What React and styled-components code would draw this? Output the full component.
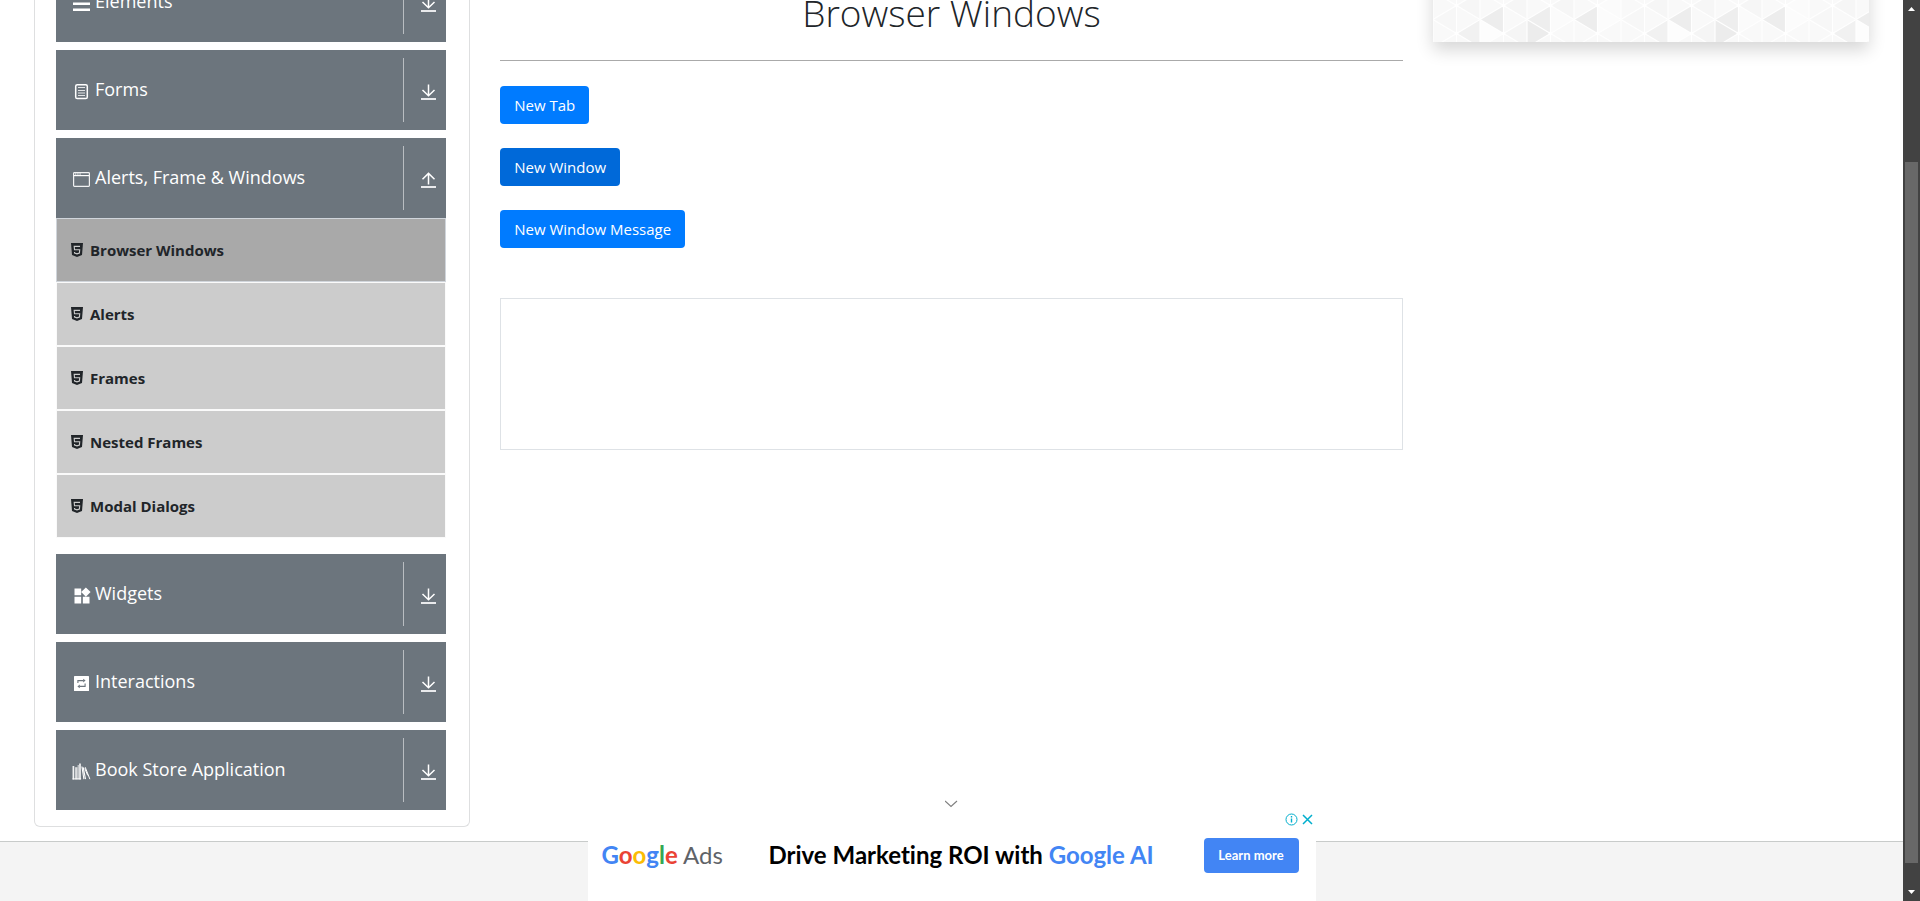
import React from 'react';
import styled, { createGlobalStyle, css } from 'styled-components';
import { MdWidgets } from 'react-icons/md';

const Global = createGlobalStyle`
  *, *::before, *::after { box-sizing: border-box; }
  body {
    margin: 0;
    background: #fff;
    color: #212529;
    font-family: "Open Sans", "Noto Sans", sans-serif;
    font-size: 15px;
    line-height: 24px;
    overflow: hidden;
  }
`;

const Shell = styled.div`
  display: flex;
  height: 100vh;
  overflow: hidden;
`;

const Page = styled.div`
  position: relative;
  flex: 1;
  display: flex;
  flex-direction: column;
  overflow: hidden;
`;

const Columns = styled.div`
  display: grid;
  grid-template-columns: 1fr 2fr 1fr;
  align-items: start;
  margin-top: -54px;
  padding: 0 19px 14px;
`;

const Column = styled.div`
  padding: 0 15px;
`;

const Panel = styled.nav`
  display: flex;
  flex-direction: column;
  gap: 8px;
  padding: 16px 23px 16px 21px;
  border: 1px solid #dedfe0;
  border-top: 0;
  border-radius: 0 0 6px 6px;
`;

const GroupHeader = styled.button`
  display: flex;
  align-items: center;
  width: 100%;
  height: 80px;
  padding: 8px 10px 8px 16px;
  border: 0;
  background: #6c757d;
  color: #fff;
  font: inherit;
  font-size: 18px;
  text-align: left;
`;

const GroupIcon = styled.span`
  display: flex;
  width: 19px;
  justify-content: center;
  padding-top: 3px;
  svg { display: block; flex: none; }
`;

const GroupLabel = styled.span`
  flex: 1;
  padding: 0 0 2px 4px;
`;

const Toggle = styled.span`
  display: flex;
  align-items: center;
  justify-content: flex-end;
  width: 33px;
  height: 64px;
  padding-top: 4px;
  border-left: 1px solid #b9bdc1;
  svg { display: block; }
`;

const Items = styled.ul`
  list-style: none;
  margin: 0 0 8px;
  padding: 0;
`;

const ItemLink = styled.a`
  display: flex;
  align-items: center;
  gap: 7px;
  height: 64px;
  padding: 0 14px;
  border: 1px solid ${p => (p.$active ? '#d0d5db' : '#fafafa')};
  background: ${p => (p.$active ? '#a9a9a9' : '#ccc')};
  color: #212529;
  font-weight: 700;
  text-decoration: none;
  svg { display: block; }
`;

const Title = styled.h1`
  margin: 0;
  padding: 43px 0 23px;
  border-bottom: 1px solid #aaa;
  font-size: 37px;
  line-height: 48px;
  font-weight: 300;
  text-align: center;
`;

const Actions = styled.div`
  display: flex;
  flex-direction: column;
  align-items: flex-start;
  gap: 24px;
  margin-top: 25px;
`;

const Action = styled.button`
  height: 38px;
  padding: 0 14px;
  border: 0;
  border-radius: 4px;
  background: ${p => (p.$pressed ? '#0069d9' : '#007bff')};
  color: #fff;
  font: inherit;
`;

const Frame = styled.div`
  height: 152px;
  margin-top: 50px;
  border: 1px solid #dee2e6;
`;

const SideBanner = styled.div`
  height: 96px;
  box-shadow: 0 8px 16px rgba(0, 0, 0, 0.16);
  svg { display: block; }
`;

const Footer = styled.footer`
  flex: 1;
  border-top: 1px solid #c8cbca;
  background: #f4f4f4;
`;

const Ad = styled.aside`
  position: absolute;
  left: 50%;
  bottom: 0;
  width: 728px;
  height: 108px;
  transform: translateX(-50%);
  display: flex;
  flex-direction: column;
  background: #fff;
`;

const Collapse = styled.button`
  display: flex;
  justify-content: center;
  align-items: center;
  height: 20px;
  padding: 2px 0 0;
  border: 0;
  background: none;
`;

const AdControls = styled.div`
  display: flex;
  justify-content: flex-end;
  gap: 4px;
  height: 14px;
  padding-right: 3px;
`;

const AdControl = styled.button`
  display: flex;
  padding: 0;
  border: 0;
  background: none;
`;

const AdBody = styled.div`
  display: flex;
  align-items: center;
  height: 40px;
  padding: 0 17px 0 14px;
  margin-top: 8px;
`;

const AdLogo = styled.span`
  width: 167px;
  font-family: Lato, sans-serif;
  font-size: 24px;
  color: #5f6368;
`;

const Tint = styled.span`
  color: ${p => p.$c};
  ${p => p.$strong && css`font-weight: 700;`}
`;

const AdText = styled.span`
  flex: 1;
  font-family: Lato, sans-serif;
  font-size: 24px;
  font-weight: 700;
  font-variant-ligatures: none;
  color: #000;
  white-space: nowrap;
`;

const AdButton = styled.a`
  display: flex;
  align-items: center;
  justify-content: center;
  width: 95px;
  height: 35px;
  border-radius: 4px;
  background: #4285f4;
  color: #fff;
  font-family: Lato, sans-serif;
  font-size: 13px;
  font-weight: 700;
  text-decoration: none;
`;

const Scrollbar = styled.div`
  display: flex;
  flex-direction: column;
  align-items: center;
  width: 17px;
  padding: 7px 0;
  background: #424242;
  svg { display: block; }
`;

const Track = styled.div`
  display: grid;
  grid-template-rows: 151fr 701fr 27fr;
  flex: 1;
  width: 13px;
`;

const Thumb = styled.div`
  grid-row: 2;
  background: #686868;
`;

const Bars = () => (
  <svg width="17" height="17" viewBox="0 0 17 17" fill="#fff">
    <path d="M0 1.5h17V4H0zM0 7.5h17V10H0zM0 13.5h17V16H0z" />
  </svg>
);

const FormIcon = () => (
  <svg width="17" height="17" viewBox="0 0 17 17" fill="none" stroke="#fff">
    <rect x="2.7" y="1.7" width="11.6" height="13.8" rx="1.6" strokeWidth="1.5" />
    <path d="M5 4.5h7M5 7.5h7M5 10h7M5 12.5h7" strokeOpacity=".8" />
  </svg>
);

const WindowIcon = () => (
  <svg width="17" height="17" viewBox="0 0 17 17" fill="none" stroke="#fff">
    <rect x=".6" y="1.6" width="15.8" height="13.8" rx=".8" strokeWidth="1.2" strokeOpacity=".9" />
    <path d="M1 4.6h15" strokeWidth="1.2" />
    <path d="M2 3h1.4M4.2 3h1.4M6.4 3h1.4" strokeWidth="1.2" />
  </svg>
);

const SwapIcon = () => (
  <svg width="17" height="17" viewBox="0 0 17 17">
    <rect x="1" y="1" width="15" height="15" rx=".6" fill="#fff" />
    <path d="M4.9 8V5.6h5.6M12.1 8.6v2.8H6.5" fill="none" stroke="#6c757d" strokeWidth="1.1" />
    <path d="M10.2 3.8l2.4 1.8-2.4 1.8zM6.8 9.6l-2.4 1.8 2.4 1.8z" fill="#6c757d" />
  </svg>
);

const BooksIcon = () => (
  <svg width="19" height="17" viewBox="0 0 19 17" fill="none" stroke="#fff">
    <path d="M1.4 3v13.4M8 .5v15.9" strokeWidth="1.7" strokeOpacity=".9" />
    <path d="M4.3 4.2v12.2" strokeWidth="2.4" strokeOpacity=".75" />
    <path d="M6.2 2v14.4" strokeWidth="1" strokeOpacity=".8" />
    <path d="M9.9 3.5l2 12.7M11.2 4.4l2.3 11.8" strokeWidth="1.1" />
    <path d="M13.2 4.2l4.7 12M12.8 5.4l2.9 7" strokeWidth="1" />
    <path d="M.5 15.9h8.6" strokeWidth="1" />
  </svg>
);

const HtmlIcon = () => (
  <svg width="12" height="14" viewBox="0 0 12 14">
    <path d="M0 0h12l-1 12-5 2-5-2z" fill="#212529" />
    <path d="M9 3.4H3.2l.3 3.3h5.2l-.3 3.3L6 10.8 3.6 10l-.1-1" fill="none" stroke="#ccc" strokeWidth="1.1" />
  </svg>
);

const Arrow = ({ up }) => (
  <svg width="15" height="17" viewBox="0 0 15 17" fill="none" stroke="#fff" strokeWidth="1.5">
    {up ? <path d="M7.5 12.6V1.4M1.5 7.2l6-5.8 6 5.8" /> : <path d="M7.5 .6v11.2M1.5 6l6 5.8 6-5.8" />}
    <path d="M0 15h15" strokeWidth="2" strokeOpacity=".85" />
  </svg>
);

const Group = ({ icon, label, open }) => (
  <GroupHeader type="button" aria-expanded={!!open}>
    <GroupIcon>{icon}</GroupIcon>
    <GroupLabel>{label}</GroupLabel>
    <Toggle><Arrow up={open} /></Toggle>
  </GroupHeader>
);

const items = ['Browser Windows', 'Alerts', 'Frames', 'Nested Frames', 'Modal Dialogs'];

// Triangular mesh: nodes sit on vertical lines 23.5 apart, 28 apart on each line.
const COL = 23.5;
const nodeY = [3.5, 31.5, 59.5, 87.5, 115.5];
const left = (col, y, fill) => (
  <path key={`l${col}-${y}`} d={`M${col * COL} ${y}l${COL} -14v28z`} fill={fill} />
);
const right = (col, y, fill) => (
  <path key={`r${col}-${y}`} d={`M${col * COL} ${y}l${-COL} -14v28z`} fill={fill} />
);

const Triangles = () => (
  <svg width="100%" height="96" aria-hidden="true">
    <defs>
      <pattern id="mesh" width={COL * 8} height="112" patternUnits="userSpaceOnUse">
        <rect width={COL * 8} height="112" fill="#f9f9f9" />
        {left(0, 73.5, '#f7f7f7')}
        {left(1, 87.5, '#f1f1f1')}
        {left(1, 59.5, '#f6f6f6')}
        {left(2, 73.5, '#ededed')}
        {right(3, 87.5, '#fdfdfd')}
        {left(3, 87.5, '#f5f5f5')}
        {left(3, 59.5, '#f6f6f6')}
        {left(4, 73.5, '#eeeeee')}
        {right(5, 87.5, '#ececec')}
        {left(5, 59.5, '#f6f6f6')}
        {right(6, 73.5, '#fbfbfb')}
        {left(6, 73.5, '#ededed')}
        {left(7, 59.5, '#fbfbfb')}
        {right(8, 73.5, '#fcfcfc')}
        <g fill="none" stroke="#fff" strokeWidth="1.2">
          {[0, 1, 2, 3, 4, 5, 6, 7, 8].map(c => <path key={c} d={`M${c * COL} 0v112`} />)}
          {[0, 2, 4, 6].map(c => nodeY.map(y => (
            <path key={`${c}-${y}`} d={`M${c * COL} ${y + 14}l${COL} -14l${COL} 14M${c * COL} ${y - 14}l${COL} 14l${COL} -14`} />
          )))}
        </g>
        <g fill="#fff">
          {[1, 3, 5, 7].map(c => nodeY.map(y => <circle key={`${c}-${y}`} cx={c * COL} cy={y} r="2" />))}
        </g>
      </pattern>
    </defs>
    <rect width="100%" height="96" fill="url(#mesh)" />
  </svg>
);

export default function App() {
  return (
    <>
      <Global />
      <Shell>
        <Page>
          <Columns>
            <Column>
              <Panel>
                <Group icon={<Bars />} label="Elements" />
                <Group icon={<FormIcon />} label="Forms" />
                <div>
                  <Group icon={<WindowIcon />} label="Alerts, Frame & Windows" open />
                  <Items>
                    {items.map((t, i) => (
                      <li key={t}>
                        <ItemLink href="#" $active={i === 0}><HtmlIcon />{t}</ItemLink>
                      </li>
                    ))}
                  </Items>
                </div>
                <Group icon={<MdWidgets size={20} />} label="Widgets" />
                <Group icon={<SwapIcon />} label="Interactions" />
                <Group icon={<BooksIcon />} label="Book Store Application" />
              </Panel>
            </Column>
            <Column>
              <Title>Browser Windows</Title>
              <Actions>
                <Action type="button">New Tab</Action>
                <Action type="button" $pressed>New Window</Action>
                <Action type="button">New Window Message</Action>
              </Actions>
              <Frame />
            </Column>
            <Column>
              <SideBanner><Triangles /></SideBanner>
            </Column>
          </Columns>
          <Footer />
          <Ad>
            <Collapse type="button" aria-label="Collapse">
              <svg width="14" height="8" viewBox="0 0 14 8" fill="none" stroke="#808080" strokeWidth="1.2"><path d="M0 1l6 5.4L12 1" /></svg>
            </Collapse>
            <AdControls>
              <AdControl type="button" aria-label="Ad information">
                <svg width="13" height="13" viewBox="0 0 13 13" fill="none" stroke="#00aecd"><circle cx="6.5" cy="6.5" r="5.5" /><path d="M6.5 5.5v4M6.5 3v1.4" strokeWidth="1.4" /></svg>
              </AdControl>
              <AdControl type="button" aria-label="Close ad">
                <svg width="11" height="13" viewBox="0 0 11 13" fill="none" stroke="#00aecd" strokeWidth="1.5"><path d="M1 2l9 9M10 2l-9 9" /></svg>
              </AdControl>
            </AdControls>
            <AdBody>
              <AdLogo>
                <Tint $c="#4285f4" $strong>G</Tint><Tint $c="#ea4335" $strong>o</Tint><Tint $c="#fbbc04" $strong>o</Tint><Tint $c="#4285f4" $strong>g</Tint><Tint $c="#34a853" $strong>l</Tint><Tint $c="#ea4335" $strong>e</Tint> Ads
              </AdLogo>
              <AdText>Drive Marketing ROI with <Tint $c="#4285f4">Google AI</Tint></AdText>
              <AdButton href="#">Learn more</AdButton>
            </AdBody>
          </Ad>
        </Page>
        <Scrollbar aria-hidden="true">
          <svg width="7" height="4" viewBox="0 0 7 4" fill="#fff"><path d="M3.5 0L7 4H0z" /></svg>
          <Track><Thumb /></Track>
          <svg width="7" height="4" viewBox="0 0 7 4" fill="#fff"><path d="M0 0h7L3.5 4z" /></svg>
        </Scrollbar>
      </Shell>
    </>
  );
}
